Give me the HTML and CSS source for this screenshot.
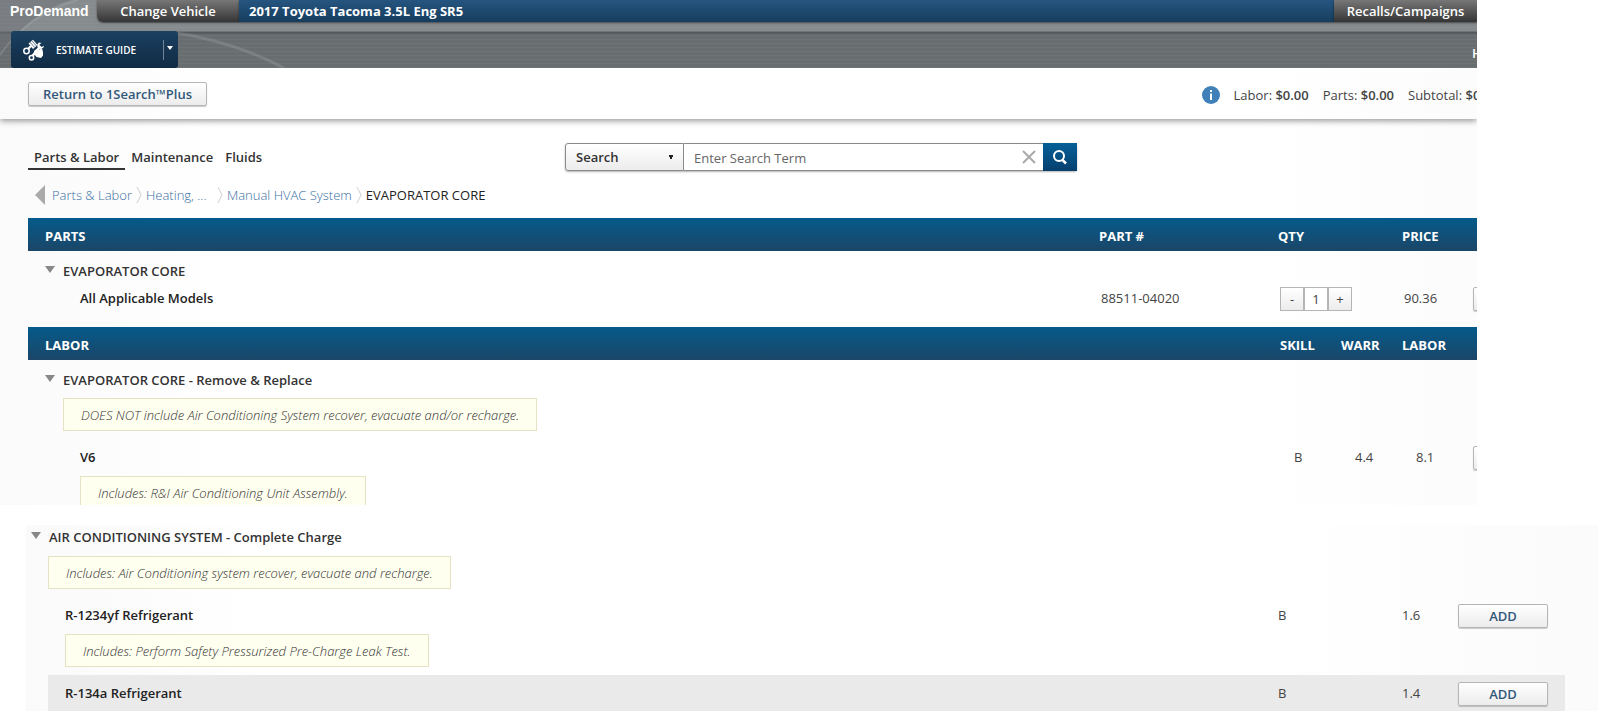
FILE: index.html
```html
<!DOCTYPE html>
<html lang="en">
<head>
  <meta charset="UTF-8" />
  <meta name="viewport" content="width=device-width, initial-scale=1.0" />
  <title>ProDemand - Estimate Guide</title>
  <link rel="stylesheet" href="styles.css">
</head>
<body>
  <div class="guide">
    <!-- Header -->
    <header class="header">
      <svg class="swoosh" width="300" height="68" viewBox="0 0 300 68" aria-hidden="true">
        <path d="M0 0H70Q28 14 0 55Z" fill="#6d7275" opacity=".5"/>
        <path d="M0 55Q28 14 78 0" fill="none" stroke="#b4b8ba" stroke-width="2" opacity=".25"/>
        <path d="M170 32Q230 40 284 68" fill="none" stroke="#a5a9ab" stroke-width="3" opacity=".3"/>
      </svg>
      <div class="top-row">
        <div class="brand">ProDemand</div>
        <button type="button" class="change-vehicle">Change Vehicle</button>
        <div class="vehicle">2017 Toyota Tacoma 3.5L Eng SR5</div>
        <button type="button" class="recalls">Recalls/Campaigns</button>
      </div>
      <div class="nav-row">
        <button type="button" class="estimate-button">
          <svg width="22" height="22" viewBox="0 0 22 22" aria-hidden="true">
            <path d="M5.500 4.500L10 .8l4.500 5.200-4.500 4z" fill="#fff"/>
            <path d="M8.500 1.500l5 5.500M6.800 3l5 5.500" stroke="#2b4a66" stroke-width=".7"/>
            <path d="M3.500 11.500L8 7" stroke="#fff" stroke-width="2.200"/>
            <circle cx="3.500" cy="12" r="2.700" fill="#17395a" stroke="#fff" stroke-width="1.500"/>
            <path d="M9 17.500L17.500 7" stroke="#fff" stroke-width="2.400"/>
            <path d="M16 3.500a3.400 3.400 0 1 0 5 3.200l-2.200 1.400-2-.6-.2-2 1.800-1.600z" fill="#fff"/>
            <path d="M11 12l2.500-2 3 .5 2.500-1 1 3.500v3.500l-2 2.500-4.500-1-2.500-3z" fill="#fff"/>
            <circle cx="8.500" cy="18.800" r="2.200" fill="#17395a" stroke="#fff" stroke-width="1.500"/>
          </svg>
          <span>ESTIMATE GUIDE</span>
          <span class="drop"></span>
        </button>
        <a href="#" class="home-link">Home</a>
      </div>
    </header>

    <!-- Totals bar -->
    <div class="totals-bar">
      <button type="button" class="return-button">Return to 1Search™Plus</button>
      <div class="totals">
        <svg width="18" height="18" viewBox="0 0 18 18" aria-hidden="true">
          <circle cx="9" cy="9" r="9" fill="#3f80b8"/>
          <path d="M9 4v2M9 7.500V14" stroke="#fff" stroke-width="2"/>
        </svg>
        <span>Labor: <b>$0.00</b></span>
        <span>Parts: <b>$0.00</b></span>
        <span class="subtotal">Subtotal: <b>$0.00</b></span>
      </div>
    </div>

    <main class="content">
      <div class="tools">
        <nav class="tabs">
          <a href="#" class="tab active">Parts &amp; Labor</a>
          <a href="#" class="tab">Maintenance</a>
          <a href="#" class="tab">Fluids</a>
        </nav>
        <form class="search">
          <select class="search-type" aria-label="Search type">
            <option>Search</option>
          </select>
          <input type="text" class="search-term" placeholder="Enter Search Term" aria-label="Search term">
          <button type="button" class="clear" aria-label="Clear">
            <svg width="14" height="14" viewBox="0 0 14 14"><path d="M1 1l12 12M13 1L1 13" stroke="#a9a9a9" stroke-width="2"/></svg>
          </button>
          <button type="button" class="go" aria-label="Search">
            <svg width="16" height="16" viewBox="0 0 16 16"><circle cx="7" cy="7" r="5" fill="none" stroke="#fff" stroke-width="2"/><path d="M10 10.500l4 4" stroke="#fff" stroke-width="2.500"/></svg>
          </button>
        </form>
      </div>

      <nav class="breadcrumb">
        <a href="#" class="back" aria-label="Back"></a>
        <a href="#">Parts &amp; Labor</a>
        <svg width="6" height="18" viewBox="0 0 6 18"><path d="M1 1l4 8-4 8" fill="none" stroke="#cfcfcf"/></svg>
        <a href="#" class="short">Heating, ...</a>
        <svg width="6" height="18" viewBox="0 0 6 18"><path d="M1 1l4 8-4 8" fill="none" stroke="#cfcfcf"/></svg>
        <a href="#">Manual HVAC System</a>
        <svg width="6" height="18" viewBox="0 0 6 18"><path d="M1 1l4 8-4 8" fill="none" stroke="#cfcfcf"/></svg>
        <span>EVAPORATOR CORE</span>
      </nav>

      <table class="items">
        <colgroup>
          <col><col class="col-part"><col class="col-qty"><col class="col-price"><col class="col-edge">
        </colgroup>
        <thead>
          <tr><th>PARTS</th><th>PART #</th><th>QTY</th><th>PRICE</th><th></th></tr>
        </thead>
        <tbody>
          <tr class="group"><td colspan="5"><span class="arrow"></span>EVAPORATOR CORE</td></tr>
          <tr class="item part">
            <td class="name">All Applicable Models</td>
            <td>88511-04020</td>
            <td>
              <div class="qty">
                <button type="button">-</button>
                <input type="text" value="1" aria-label="Quantity">
                <button type="button">+</button>
              </div>
            </td>
            <td>90.36</td>
            <td class="edge"><button type="button" class="add">ADD</button></td>
          </tr>
        </tbody>
      </table>

      <table class="items labor">
        <colgroup>
          <col><col class="col-skill"><col class="col-skill"><col class="col-price"><col class="col-edge">
        </colgroup>
        <thead>
          <tr><th>LABOR</th><th>SKILL</th><th>WARR</th><th>LABOR</th><th></th></tr>
        </thead>
        <tbody>
          <tr class="group"><td colspan="5"><span class="arrow"></span>EVAPORATOR CORE - Remove &amp; Replace</td></tr>
          <tr class="note-row"><td colspan="5"><div class="note">DOES NOT include Air Conditioning System recover, evacuate and/or recharge.</div></td></tr>
          <tr class="item">
            <td class="name">V6</td>
            <td class="value">B</td>
            <td class="value">4.4</td>
            <td class="value">8.1</td>
            <td class="edge"><button type="button" class="add">ADD</button></td>
          </tr>
          <tr class="note-row inner"><td colspan="5"><div class="note">Includes: R&amp;I Air Conditioning Unit Assembly.</div></td></tr>
        </tbody>
      </table>
    </main>
  </div>

  <!-- Related labor -->
  <section class="related">
    <table class="items">
      <colgroup>
        <col><col class="col-qty"><col class="col-time"><col class="col-add">
      </colgroup>
      <tbody>
        <tr class="group"><td colspan="4"><span class="arrow"></span>AIR CONDITIONING SYSTEM - Complete Charge</td></tr>
        <tr class="note-row"><td colspan="4"><div class="note">Includes: Air Conditioning system recover, evacuate and recharge.</div></td></tr>
        <tr class="item">
          <td class="name">R-1234yf Refrigerant</td>
          <td>B</td>
          <td>1.6</td>
          <td><button type="button" class="add">ADD</button></td>
        </tr>
        <tr class="note-row inner"><td colspan="4"><div class="note">Includes: Perform Safety Pressurized Pre-Charge Leak Test.</div></td></tr>
        <tr class="item shaded">
          <td class="name">R-134a Refrigerant</td>
          <td>B</td>
          <td>1.4</td>
          <td><button type="button" class="add">ADD</button></td>
        </tr>
      </tbody>
    </table>
  </section>
</body>
</html>
```
FILE: styles.css
```css
* {
  box-sizing: border-box;
}

body {
  margin: 0;
  background-color: #fff;
  color: #444;
  font-family: "Open Sans", "Noto Sans", sans-serif;
  font-size: 13px;
  line-height: 20px;
}

button, input, select {
  font-family: inherit;
  font-size: 13px;
  margin: 0;
  padding: 0;
}

a {
  color: inherit;
  text-decoration: none;
}

/* Upper panel, cut off at its right and bottom edge */
.guide {
  margin-right: 121px;
  height: 505px;
  overflow: hidden;
  background: linear-gradient(90deg, #fafafa, #fff 15%, #fff 85%, #fcfcfc);
}

/* Header */
.header {
  position: relative;
  background:
    repeating-linear-gradient(0deg, rgba(255, 255, 255, 0.04) 0 1px, transparent 1px 4px),
    linear-gradient(#868b8e 0, #868b8e 31px, #4d5356 32px, #686d70 35px, #686d70 100%);
}

.swoosh {
  position: absolute;
  top: 0;
  left: 0;
}

.top-row {
  position: relative;
  display: flex;
  height: 22px;
  color: #fff;
  line-height: 22px;
}

.brand {
  width: 97px;
  padding-left: 10px;
  font-family: "Liberation Sans", Arial, sans-serif;
  font-size: 14px;
  font-weight: bold;
}

.change-vehicle, .recalls {
  border: 0;
  background: linear-gradient(#777, #353535);
  color: #fff;
  font-weight: 600;
  box-shadow: 0 1px 2px rgba(0, 0, 0, 0.5);
}

.change-vehicle {
  width: 142px;
  border-radius: 0 0 0 6px;
}

.vehicle {
  flex-grow: 1;
  padding-left: 10px;
  background: linear-gradient(#255580, #173d5d);
  box-shadow: 0 1px 2px rgba(0, 0, 0, 0.5);
  font-weight: 700;
}

.recalls {
  width: 143px;
}

.nav-row {
  position: relative;
  display: flex;
  align-items: flex-start;
  justify-content: space-between;
  height: 46px;
  padding: 9px 0 0 11px;
}

.estimate-button {
  display: flex;
  align-items: center;
  width: 167px;
  height: 37px;
  padding-left: 12px;
  border: 0;
  border-radius: 3px;
  background: linear-gradient(#1b4161, #112a44);
  color: #fff;
  font-size: 10px;
  font-weight: 600;
  gap: 11px;
}

.drop {
  display: flex;
  align-items: center;
  height: 20px;
  margin-left: auto;
  padding: 0 5px 3px 3px;
  border-left: 1px solid #6f8496;
}

.drop::before {
  content: "";
  border: 3px solid transparent;
  border-top: 4px solid #fff;
  border-bottom: 0;
}

.home-link {
  width: 5px;
  padding-top: 12px;
  color: #fff;
  font-weight: 600;
  white-space: nowrap;
}

/* Totals bar */
.totals-bar {
  display: flex;
  justify-content: space-between;
  height: 51px;
  padding: 14px 0 0 28px;
  box-shadow: 0 2px 6px rgba(0, 0, 0, 0.4);
}

.return-button, .add {
  height: 24px;
  border: 1px solid #b5b5b5;
  border-radius: 2px;
  background: linear-gradient(#fff, #ececec);
  box-shadow: 0 1px 1px rgba(0, 0, 0, 0.2);
  color: #31587a;
  font-weight: 600;
}

.return-button {
  width: 179px;
}

.totals {
  display: flex;
  align-items: center;
  height: 26px;
  gap: 14px;
}

.totals b {
  font-weight: 600;
}

.subtotal {
  width: 69px;
  white-space: nowrap;
}

/* Tabs and search */
.content {
  padding: 24px 0 0 28px;
}

.tools {
  display: grid;
  grid-template-columns: 537fr 512px 400fr;
}

.tabs {
  display: flex;
  align-items: flex-start;
  color: #333;
  font-weight: 600;
}

.tab {
  height: 27px;
  padding: 4px 6px 0;
  border-bottom: 2px solid transparent;
}

.tab.active {
  border-bottom-color: #333;
}

.search {
  display: flex;
  height: 28px;
  box-shadow: 0 1px 2px rgba(0, 0, 0, 0.3);
  border-radius: 3px;
}

.search-type {
  width: 119px;
  padding-left: 10px;
  border: 1px solid #8a8a8a;
  border-radius: 3px 0 0 3px;
  appearance: none;
  background:
    conic-gradient(from -27deg at 50% 100%, #222 54deg, transparent 0) 102px 11px / 6px 5px no-repeat,
    linear-gradient(#fff, #ececec);
  color: #333;
  font-weight: 600;
}

.search-term {
  flex-grow: 1;
  min-width: 0;
  padding: 2px 0 0 10px;
  border: 1px solid #8a8a8a;
  border-width: 1px 0;
}

.search-term::placeholder {
  color: #666;
}

.clear {
  width: 28px;
  padding-top: 3px;
  border: 1px solid #8a8a8a;
  border-width: 1px 0;
  background-color: #fff;
}

.go {
  width: 34px;
  padding-top: 3px;
  border: 0;
  background: linear-gradient(#045f97, #06406f);
}

/* Breadcrumb */
.breadcrumb {
  display: flex;
  align-items: center;
  height: 20px;
  margin: 14px 0 13px;
  padding-left: 7px;
  color: #222;
  gap: 4px;
}

.breadcrumb a {
  color: #3a6fa2;
  font-weight: 300;
}

.breadcrumb .back {
  margin-right: 3px;
  border: 10px solid transparent;
  border-right-color: #aaa;
  border-left: 0;
}

.breadcrumb .short {
  width: 67px;
}

/* Parts and labor tables */
.items {
  width: 100%;
  border-collapse: collapse;
  table-layout: fixed;
}

.col-part {
  width: 179px;
}

.col-qty {
  width: 124px;
}

.col-price {
  width: 74px;
}

.col-skill {
  width: 61px;
}

.col-edge {
  width: 1px;
}

.col-time {
  width: 56px;
}

.col-add {
  width: 107px;
}

.items th {
  height: 33px;
  padding: 3px 0 0;
  background: linear-gradient(#055a8a, #1b4668);
  color: #fff;
  font-weight: 700;
  text-align: left;
}

.items th:first-child {
  padding-left: 17px;
}

.items td {
  padding: 0;
  vertical-align: top;
}

.items .group td {
  height: 34px;
  padding: 10px 0 0 17px;
  color: #333;
  font-weight: 600;
}

.arrow {
  display: inline-block;
  margin-right: 8px;
  border: 5px solid transparent;
  border-top: 7px solid #888;
  border-bottom: 0;
  vertical-align: 3px;
}

.items .item td {
  height: 30px;
  padding-top: 2px;
}

.items .item .name {
  padding-left: 52px;
  color: #222;
  font-weight: 600;
}

.items .part td {
  height: 42px;
  padding: 3px 0 0 2px;
}

.items .item .value {
  padding-left: 14px;
}

.item .edge {
  position: relative;
}

.add {
  display: block;
  width: 90px;
  margin-top: -1px;
}

.edge .add {
  position: absolute;
  left: -3px;
}

.qty {
  display: flex;
  margin-top: -1px;
}

.qty button, .qty input {
  width: 24px;
  height: 24px;
  border: 1px solid #b5b5b5;
  background: linear-gradient(#fff, #ececec);
  color: #444;
  text-align: center;
}

.qty input {
  background: #fff;
}

.items .note-row td {
  height: 51px;
  padding: 4px 0 0 35px;
}

.items .inner td {
  height: 43px;
  padding: 1px 0 0 52px;
}

.note {
  display: inline-block;
  height: 33px;
  padding: 6px 17px;
  border: 1px solid #e6e3c5;
  background-color: #fffff0;
  color: #333;
  font-style: italic;
  font-weight: 300;
}

/* Related labor */
.related {
  margin: 20px 0 2px 26px;
  padding-right: 33px;
  background: linear-gradient(90deg, #fafafa, #fff 15%, #fff 80%, #fbfbfb);
}

.related .items .group td {
  height: 27px;
  padding: 2px 0 0 5px;
}

.related .items .note-row td {
  padding-left: 22px;
}

.related .items .inner td {
  height: 42px;
  padding-left: 39px;
}

.related .items .item .name {
  padding-left: 39px;
}

.related .items .shaded td {
  height: 36px;
  padding-top: 8px;
  background-color: #eaeaea;
}

.related .items .shaded .name {
  background: linear-gradient(#eaeaea, #eaeaea) 22px 0 no-repeat;
}
```
